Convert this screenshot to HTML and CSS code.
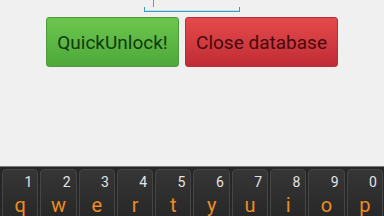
FILE: index.html
```html
<!DOCTYPE html>
<html>
<head>
<meta charset="utf-8">
<link rel="stylesheet" href="styles.css">
</head>
<body>
<div class="screen">
  <div class="field">
    <div class="cursor"></div>
    <div class="underline"></div>
  </div>
  <div class="buttons">
    <div class="btn green">QuickUnlock!</div>
    <div class="btn red">Close database</div>
  </div>
  <div class="spacer"></div>
  <div class="keyboard">
    <div class="key"><span class="num">1</span><span class="let">q</span></div>
    <div class="key"><span class="num">2</span><span class="let">w</span></div>
    <div class="key"><span class="num">3</span><span class="let">e</span></div>
    <div class="key"><span class="num">4</span><span class="let">r</span></div>
    <div class="key"><span class="num">5</span><span class="let">t</span></div>
    <div class="key"><span class="num">6</span><span class="let">y</span></div>
    <div class="key"><span class="num">7</span><span class="let">u</span></div>
    <div class="key"><span class="num">8</span><span class="let">i</span></div>
    <div class="key"><span class="num">9</span><span class="let">o</span></div>
    <div class="key"><span class="num">0</span><span class="let">p</span></div>
  </div>
</div>
</body>
</html>
```
FILE: styles.css
```css
html, body {
  margin: 0;
  padding: 0;
}
body {
  background: #f0f0f0;
  font-family: Roboto, "Liberation Sans", sans-serif;
  overflow: hidden;
}
.screen {
  width: 384px;
  height: 216px;
  display: flex;
  flex-direction: column;
  overflow: hidden;
}
.field {
  height: 17px;
  position: relative;
  flex: none;
}
.cursor {
  position: absolute;
  left: 153px;
  top: 0;
  width: 1px;
  height: 7px;
  background: #8a8a8a;
}
.underline {
  position: absolute;
  left: 144px;
  top: 7px;
  width: 94px;
  height: 4px;
  border: 1px solid #3a9fb8;
  border-top: none;
  box-shadow: inset 0 -1px 0 #bfe3ec;
}
.buttons {
  display: flex;
  gap: 6px;
  padding-left: 46px;
  flex: none;
}
.btn {
  height: 50px;
  box-sizing: border-box;
  border-radius: 3px;
  display: flex;
  align-items: center;
  justify-content: center;
  font-size: 19px;
}
.green {
  width: 133px;
  background: linear-gradient(#6cc64e, #4ea83a);
  border: 1px solid #4c9a3a;
  color: #123a0c;
}
.red {
  width: 153px;
  background: linear-gradient(#e44a4a, #c02c36);
  border: 1px solid #b43036;
  color: #460a0c;
}
.spacer {
  flex: 1;
}
.keyboard {
  flex: none;
  height: 50px;
  box-sizing: border-box;
  background: #262626;
  border-top: 1px solid #7a7a7a;
  padding: 2px 1px 0 2px;
  display: grid;
  grid-template-columns: repeat(10, 1fr);
  gap: 2px;
}
.key {
  height: 60px;
  box-sizing: border-box;
  border: 1px solid #464646;
  border-radius: 4px;
  background: linear-gradient(#363636, #242424);
  position: relative;
}
.num {
  position: absolute;
  right: 5px;
  top: 4px;
  font-size: 14px;
  color: #e4e4e4;
}
.let {
  position: absolute;
  left: 0;
  right: 0;
  top: 23px;
  text-align: center;
  font-size: 20px;
  color: #ee8c22;
}
```
